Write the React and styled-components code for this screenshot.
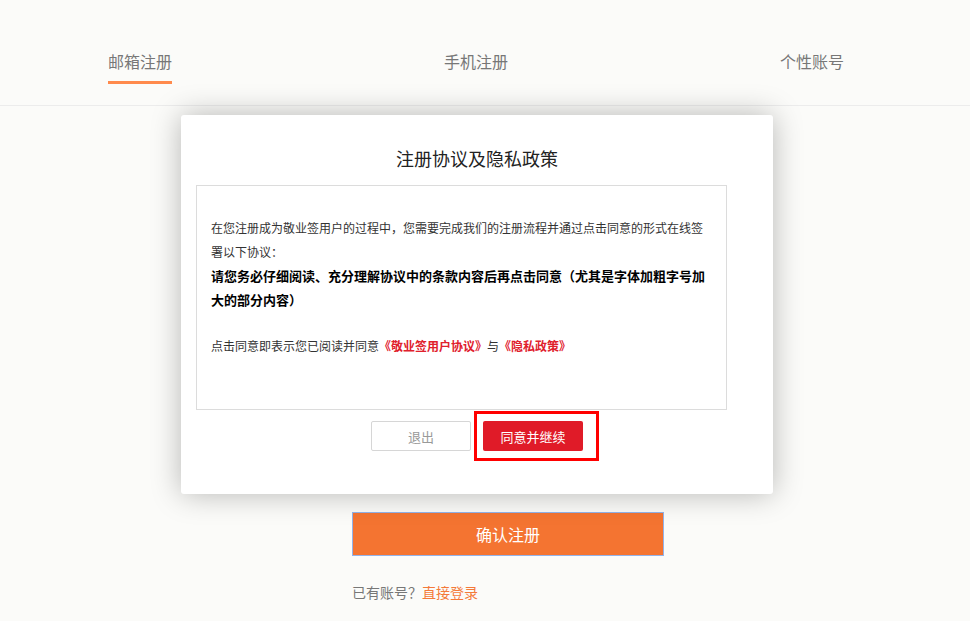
import React from "react";
import styled, { createGlobalStyle } from "styled-components";

const GlobalStyle = createGlobalStyle`
    html, body {
        margin: 0;
        padding: 0;
        background: #fbfbf9;
        font-family: "Noto Sans CJK SC", "Noto Sans", sans-serif;
    }
    * {
        box-sizing: border-box;
    }
`;

const tabs = ["邮箱注册", "手机注册", "个性账号"];

export default function App() {
    return (
        <>
            <GlobalStyle />
            <Page>
                <Header>
                    <Tabs>
                        {tabs.map((name, index) => (
                            <Tab key={index} active={index === 0}>
                                {name}
                            </Tab>
                        ))}
                    </Tabs>
                </Header>

                <Form>
                    <ConfirmButton>确认注册</ConfirmButton>
                    <LoginLine>
                        已有账号？<LoginLink href="#">直接登录</LoginLink>
                    </LoginLine>
                </Form>

                <Modal>
                    <ModalTitle>注册协议及隐私政策</ModalTitle>
                    <AgreementBox>
                        <Para>
                            在您注册成为敬业签用户的过程中，您需要完成我们的注册流程并通过点击同意的形式在线签署以下协议：
                        </Para>
                        <Para bold>
                            请您务必仔细阅读、充分理解协议中的条款内容后再点击同意（尤其是字体加粗字号加大的部分内容）
                        </Para>
                        <Para gap>
                            点击同意即表示您已阅读并同意
                            <DocLink>《敬业签用户协议》</DocLink>与
                            <DocLink>《隐私政策》</DocLink>
                        </Para>
                    </AgreementBox>
                    <Actions>
                        <ExitButton>退出</ExitButton>
                        <AgreeButton>同意并继续</AgreeButton>
                    </Actions>
                </Modal>
            </Page>
        </>
    );
}

const Page = styled.div`
    position: relative;
    min-height: 621px;
    background: #fbfbf9;
`;

const Header = styled.div`
    height: 106px;
    border-bottom: 1px solid #ececec;
    padding-left: 108px;
`;

const Tabs = styled.div`
    width: 736px;
    display: flex;
    justify-content: space-between;
`;

const Tab = styled.div`
    padding-top: 50px;
    padding-bottom: 9px;
    line-height: 22px;
    font-size: 16px;
    color: #777;
    border-bottom: 3px solid ${(p) => (p.active ? "#ff8a4c" : "transparent")};
    cursor: pointer;
`;

const Form = styled.div`
    padding: 406px 0 0 352px;
`;

const ConfirmButton = styled.button`
    display: block;
    width: 312px;
    height: 44px;
    border: 1px solid #93b3ea;
    background: #f47431;
    color: #fff;
    font-family: inherit;
    font-size: 16px;
    cursor: pointer;
`;

const LoginLine = styled.div`
    margin-top: 26px;
    line-height: 20px;
    font-size: 14px;
    color: #777;
`;

const LoginLink = styled.a`
    color: #f47a3a;
    text-decoration: none;
`;

const Modal = styled.div`
    position: absolute;
    top: 115px;
    left: 181px;
    width: 592px;
    height: 379px;
    padding-top: 31px;
    background: #fff;
    border-radius: 3px;
    box-shadow: 0 0 30px rgba(0, 0, 0, 0.28);
`;

const ModalTitle = styled.h2`
    margin: 0 0 15px;
    text-align: center;
    font-size: 18px;
    line-height: 24px;
    font-weight: normal;
    color: #222;
`;

const AgreementBox = styled.div`
    margin-left: 15px;
    width: 531px;
    height: 225px;
    padding: 30px 18px 0 14px;
    border: 1px solid #dcdcdc;
    overflow: hidden;
`;

const Para = styled.p`
    margin: ${(p) => (p.gap ? "22px 0 0" : "0")};
    font-size: ${(p) => (p.bold ? "13px" : "12px")};
    font-weight: ${(p) => (p.bold ? "bold" : "normal")};
    line-height: 24px;
    color: ${(p) => (p.bold ? "#000" : "#333")};
`;

const DocLink = styled.span`
    color: #e0202c;
    font-weight: bold;
`;

const Actions = styled.div`
    display: flex;
    justify-content: center;
    gap: 12px;
    margin-top: 11px;
`;

const ExitButton = styled.button`
    width: 100px;
    height: 30px;
    border: 1px solid #d6d6d6;
    border-radius: 2px;
    background: #fff;
    color: #999;
    font-family: inherit;
    font-size: 13px;
    cursor: pointer;
`;

const AgreeButton = styled.button`
    position: relative;
    width: 100px;
    height: 30px;
    border: none;
    border-radius: 2px;
    background: #e01b28;
    color: #fff;
    font-family: inherit;
    font-size: 13px;
    cursor: pointer;

    &::after {
        content: "";
        position: absolute;
        top: -10px;
        left: -9px;
        right: -16px;
        bottom: -10px;
        border: 3px solid #ff0000;
        pointer-events: none;
    }
`;
